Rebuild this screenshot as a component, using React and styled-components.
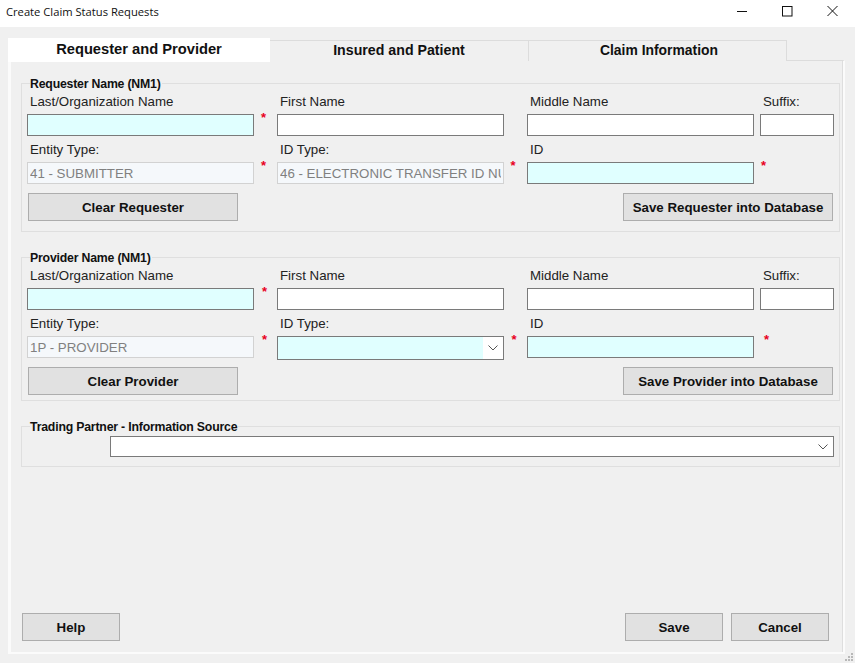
import React from "react";
import styled, { createGlobalStyle } from "styled-components";

const Global = createGlobalStyle`
  html, body { margin: 0; padding: 0; background: #f0f0f0; }
  body { font-family: "Liberation Sans", Arial, sans-serif; }
  * { box-sizing: border-box; }
`;

const Window = styled.div`
  position: relative;
  width: 855px;
  height: 663px;
  display: flex;
  flex-direction: column;
  background: #f0f0f0;
  overflow: hidden;
`;
const TitleBar = styled.div`
  flex: none;
  height: 27px;
  background: #fff;
  display: flex;
  align-items: center;
  padding-left: 6px;
`;
const Title = styled.div`
  flex: 1;
  font: 11.2px "Open Sans", "Noto Sans", sans-serif;
  color: #111;
  position: relative;
  top: -2px;
`;
const WinButton = styled.svg`
  width: 46px;
  height: 27px;
  flex: none;
  display: block;
`;
const CloseButton = styled(WinButton)`
  width: 47px;
`;
const TabStrip = styled.div`
  flex: none;
  height: 22px;
  margin: 11px 0 0 8px;
  display: flex;
  align-items: flex-start;
  position: relative;
  z-index: 1;
`;
const Tab = styled.div`
  width: ${(p) => p.$w}px;
  height: ${(p) => (p.$active ? 24 : 21)}px;
  margin-top: ${(p) => (p.$active ? 0 : 2)}px;
  background: ${(p) => (p.$active ? "#fff" : "#f0f0f0")};
  border: ${(p) => (p.$active ? "none" : "1px solid #dcdcdc")};
  border-left: none;
  border-bottom: none;
  display: flex;
  justify-content: center;
  align-items: center;
  font-weight: 700;
  font-size: ${(p) => p.$size}px;
  color: #111;
  padding-bottom: ${(p) => (p.$active ? 3 : 2)}px;
  padding-left: ${(p) => p.$shift || 0}px;
`;
const Panel = styled.div`
  flex: none;
  width: 837px;
  height: 594px;
  margin: 0 0 0 8px;
  background: #f0f0f0;
  border-left: 3px solid #fbfbfb;
  border-right: 2px solid #fbfbfb;
  border-bottom: 2px solid #fbfbfb;
  border-top: 1px solid #dcdcdc;
  box-shadow: inset -1px 0 0 #dedede;
  padding: 22px 3px 0 10px;
  display: flex;
  flex-direction: column;
`;
const Group = styled.div`
  position: relative;
  border: 1px solid #dfdfdf;
  margin-bottom: 25px;
  padding: 4px 5px ${(p) => p.$pb}px;
`;
const TopRowGroup = styled(Group)`
  padding: 9px 5px 9px 88px;
`;
const Legend = styled.div`
  position: absolute;
  top: -7px;
  left: 8px;
  background: #f0f0f0;
  padding: 0 1px 0 0;
  font-weight: 700;
  font-size: 12.3px;
  line-height: 14px;
  letter-spacing: -0.2px;
  color: #111;
  white-space: nowrap;
`;
const Fields = styled.div`
  display: grid;
  grid-template-columns: 227px 23px 227px 23px 227px 6px 74px;
  grid-template-rows: 26px 22px 26px 22px;
`;
const Label = styled.div`
  grid-column: ${(p) => p.$col};
  font-size: 13.3px;
  line-height: 27px;
  padding-left: 3px;
  color: #222;
  white-space: nowrap;
`;
const Input = styled.input`
  grid-column: ${(p) => p.$col};
  width: 100%;
  height: 22px;
  min-width: 0;
  margin: 0;
  outline: none;
  border: 1px solid ${(p) => (p.disabled ? "#d2d2d2" : "#7a7a7a")};
  background: ${(p) => (p.disabled ? "#f5f8fb" : p.$req ? "#e0ffff" : "#fff")};
  padding: 0 2px;
  font: 13.3px "Liberation Sans", Arial, sans-serif;
  color: #808080;
  &:disabled { color: #808080; -webkit-text-fill-color: #808080; opacity: 1; }
`;
const Star = styled.div`
  grid-column: ${(p) => p.$col};
  margin-top: -3px;
  color: #e8001c;
  font-weight: 700;
  font-size: 13px;
  line-height: 14px;
  padding-left: ${(p) => p.$x}px;
`;
const Combo = styled.div`
  grid-column: ${(p) => p.$col};
  position: relative;
  height: ${(p) => p.$h}px;
  border: 1px solid #7a7a7a;
  background: #fff;
  display: flex;
  align-items: stretch;
  justify-content: flex-end;
`;
const ComboFill = styled.div`
  flex: 1;
  background: ${(p) => (p.$req ? "#e0ffff" : "#fff")};
`;
const ComboArrow = styled.div`
  width: 20px;
  flex: none;
  display: flex;
  align-items: center;
  justify-content: center;
`;
const Actions = styled.div`
  display: flex;
  justify-content: space-between;
  margin: 9px 1px 0;
`;
const Button = styled.button`
  width: ${(p) => p.$w}px;
  height: 28px;
  margin: 0;
  padding: 0;
  background: #e1e1e1;
  border: 1px solid #adadad;
  font: 700 13.3px "Liberation Sans", Arial, sans-serif;
  color: #111;
`;
const Footer = styled.div`
  margin-top: auto;
  height: 39px;
  padding: 0 11px 0 1px;
  display: flex;
  gap: 8px;
`;
const Spacer = styled.div`
  flex: 1;
`;
const Grip = styled.svg`
  position: absolute;
  right: 1px;
  bottom: 1px;
  width: 10px;
  height: 10px;
`;

const Chevron = () => (
  <svg width="10" height="6" viewBox="0 0 10 6">
    <path d="M0.5 0.5 L5 5 L9.5 0.5" fill="none" stroke="#555" strokeWidth="1" />
  </svg>
);

function NameFields({ entity, idType, stars }) {
  return (
    <Fields>
      <Label $col={1}>Last/Organization Name</Label>
      <Label $col={3}>First Name</Label>
      <Label $col={5}>Middle Name</Label>
      <Label $col={7}>Suffix:</Label>
      <Input $col={1} $req />
      <Star $col={2} $x={stars[0]}>*</Star>
      <Input $col={3} />
      <Input $col={5} />
      <Input $col={7} />
      <Label $col={1}>Entity Type:</Label>
      <Label $col={3}>ID Type:</Label>
      <Label $col={5}>ID</Label>
      <Input $col={1} disabled defaultValue={entity} />
      <Star $col={2} $x={stars[0]}>*</Star>
      {idType ? (
        <Input $col={3} disabled defaultValue={idType} />
      ) : (
        <Combo $col={3} $h={24}>
          <ComboFill $req />
          <ComboArrow><Chevron /></ComboArrow>
        </Combo>
      )}
      <Star $col={4} $x={stars[1]}>*</Star>
      <Input $col={5} $req />
      <Star $col="6 / 8" $x={stars[2]}>*</Star>
    </Fields>
  );
}

export default function App() {
  return (
    <>
      <Global />
      <Window>
        <TitleBar>
          <Title>Create Claim Status Requests</Title>
          <WinButton viewBox="0 0 46 27">
            <path d="M21 11.5H31" stroke="#111" strokeWidth="1" fill="none" />
          </WinButton>
          <WinButton viewBox="0 0 46 27">
            <rect x="20.5" y="6.5" width="9.5" height="9.5" stroke="#111" fill="none" />
          </WinButton>
          <CloseButton viewBox="0 0 47 27">
            <path d="M19.5 6L29.5 16M29.5 6L19.5 16" stroke="#111" strokeWidth="1" fill="none" />
          </CloseButton>
        </TitleBar>
        <TabStrip>
          <Tab $w={262} $size={14.7} $active>Requester and Provider</Tab>
          <Tab $w={259} $size={14.2}>Insured and Patient</Tab>
          <Tab $w={258} $size={13.9} $shift={3}>Claim Information</Tab>
        </TabStrip>
        <Panel>
          <Group $pb={10}>
            <Legend>Requester Name (NM1)</Legend>
            <NameFields entity="41 - SUBMITTER" idType="46 - ELECTRONIC TRANSFER ID NUMBER" stars={[7, 6.5, 7]} />
            <Actions>
              <Button $w={210}>Clear Requester</Button>
              <Button $w={210}>Save Requester into Database</Button>
            </Actions>
          </Group>
          <Group $pb={5}>
            <Legend>Provider Name (NM1)</Legend>
            <NameFields entity="1P - PROVIDER" stars={[8, 7.5, 10]} />
            <Actions>
              <Button $w={210}>Clear Provider</Button>
              <Button $w={210}>Save Provider into Database</Button>
            </Actions>
          </Group>
          <TopRowGroup>
            <Legend>Trading Partner - Information Source</Legend>
            <Combo $h={21}>
              <ComboFill />
              <ComboArrow><Chevron /></ComboArrow>
            </Combo>
          </TopRowGroup>
          <Footer>
            <Button $w={98}>Help</Button>
            <Spacer />
            <Button $w={98}>Save</Button>
            <Button $w={98}>Cancel</Button>
          </Footer>
        </Panel>
        <Grip viewBox="0 0 10 10">
          <g fill="#b8b8b8">
            <rect x="7" y="1" width="2" height="2" />
            <rect x="4" y="4" width="2" height="2" />
            <rect x="7" y="4" width="2" height="2" />
            <rect x="1" y="7" width="2" height="2" />
            <rect x="4" y="7" width="2" height="2" />
            <rect x="7" y="7" width="2" height="2" />
          </g>
        </Grip>
      </Window>
    </>
  );
}
